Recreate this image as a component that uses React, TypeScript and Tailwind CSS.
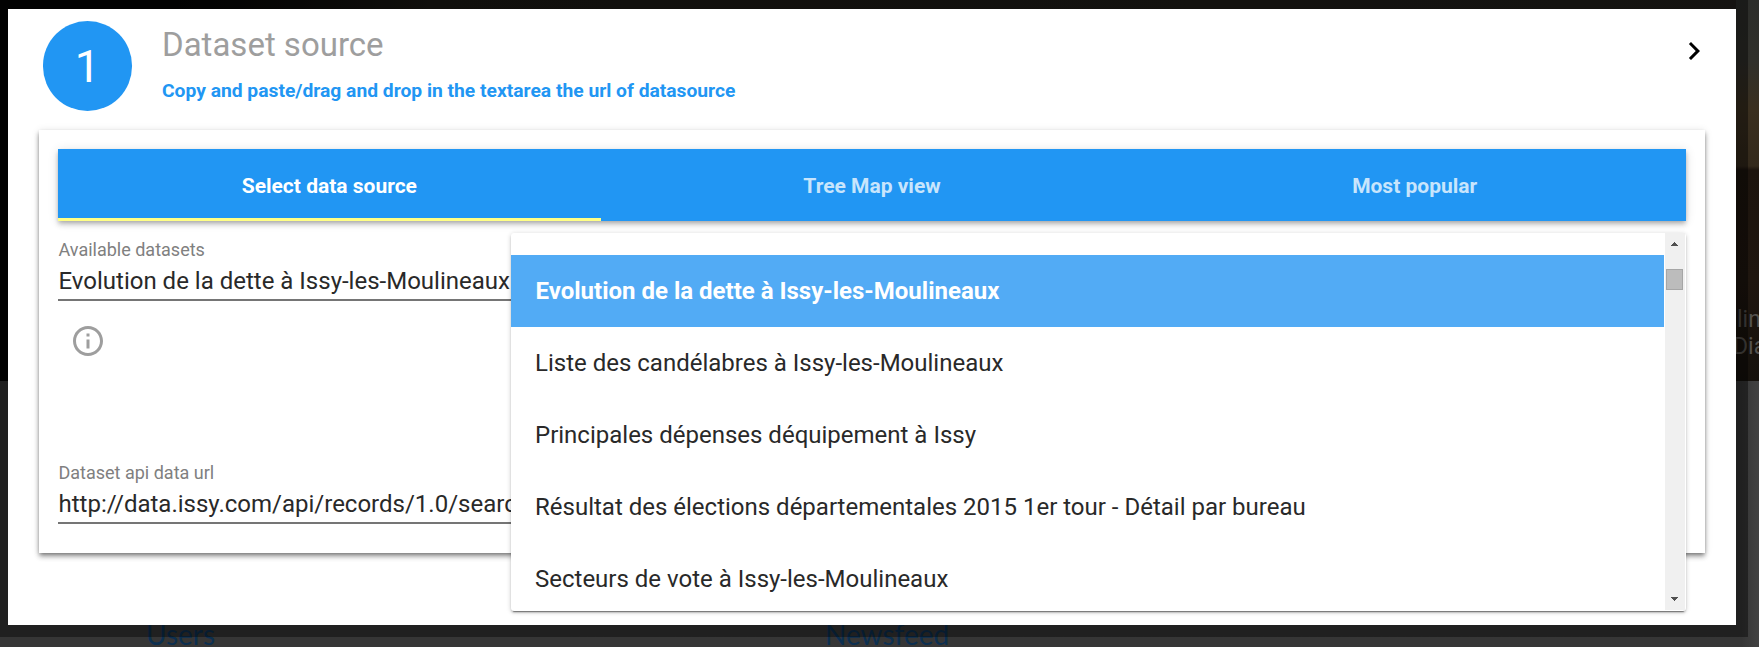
import React from "react";

const tabs = ["Select data source", "Tree Map view", "Most popular"];

const datasets = [
  "Evolution de la dette à Issy-les-Moulineaux",
  "Liste des candélabres à Issy-les-Moulineaux",
  "Principales dépenses déquipement à Issy",
  "Résultat des élections départementales 2015 1er tour - Détail par bureau",
  "Secteurs de vote à Issy-les-Moulineaux",
];

function Backdrop() {
  return (
    <div className="absolute inset-0 flex flex-col bg-[#363636]">
      <div className="flex h-[381px] shrink-0 justify-end bg-linear-to-r from-[#040404] from-10% via-[#1c1a15] via-25% to-[#23211d]">
        <div className="flex w-[23px] flex-col justify-end bg-[linear-gradient(#2c2d2a_0px,#30302b_60px,#3a2f1f_110px,#33291b_166px,#1c140d_170px,#1f160f_280px,#15110c_381px)] pb-[21px] text-[23px] leading-[27px] text-[#55524e]">
          <span className="ml-[1px] whitespace-nowrap">lin</span>
          <span className="-ml-[3px] whitespace-nowrap">Dia</span>
        </div>
      </div>
      <div className="flex flex-1 items-end bg-linear-to-r from-[#363636] from-[99%] to-[#424242] pl-[146px] font-['Lato',sans-serif] text-[28px] leading-[26px] text-[#0c2f50]">
        <span className="w-[679px]">Users</span>
        <span>Newsfeed</span>
      </div>
    </div>
  );
}

function Field({ label, value }: { label: string; value: string }) {
  return (
    <div className="flex h-[66px] flex-col border-b-2 border-[#757575] pt-[2px]">
      <span className="h-[26px] pl-[0.5px] text-[18px] leading-[26px] text-[#808080]">{label}</span>
      <span className="mt-px overflow-hidden pl-[0.5px] text-[24px] leading-[34px] whitespace-nowrap text-[#292929]">{value}</span>
    </div>
  );
}

function Scrollbar() {
  return (
    <div className="mr-px mb-px ml-px flex w-[20px] flex-col items-center bg-[#f0f0f0]">
      <svg width="7" height="4" viewBox="0 0 7 4" className="mt-[9px] mr-px" shapeRendering="crispEdges">
        <path d="M3 0h1v1h1v1h1v1h1v1H0V3h1V2h1V1h1z" fill="#505050" />
      </svg>
      <div className="mt-[23px] mr-[2px] h-[21px] w-[17px] border border-[#a6a6a6] bg-[#bcbcbc]" />
      <svg width="7" height="4" viewBox="0 0 7 4" className="mt-auto mr-px mb-[9px]" shapeRendering="crispEdges">
        <path d="M0 0h7v1H6v1H5v1H4v1H3V3H2V2H1V1H0z" fill="#505050" />
      </svg>
    </div>
  );
}

function DatasetMenu() {
  return (
    <div className="absolute top-[103px] left-[472px] flex h-[378px] w-[1175px] rounded-[3px] bg-white shadow-[0_1px_5px_rgba(0,0,0,0.2),0_2px_2px_rgba(0,0,0,0.14),0_3px_1px_-2px_rgba(0,0,0,0.4)]">
      <ul className="flex w-[1153px] flex-col overflow-hidden pt-[22px]">
        {datasets.map((name, i) => (
          <li
            key={name}
            className={
              i === 0
                ? "flex h-[72px] shrink-0 items-center bg-[#52abf5] pl-[24.5px] text-[24px] font-bold text-white"
                : "flex h-[72px] shrink-0 items-center pl-[24px] text-[24px] text-[#292929]"
            }
          >
            {name}
          </li>
        ))}
      </ul>
      <Scrollbar />
    </div>
  );
}

export default function App() {
  return (
    <div className="relative h-[647px] w-[1759px] overflow-hidden font-['Roboto',sans-serif]">
      <Backdrop />
      <div className="relative h-[637px] w-[1748px] bg-black/40 pt-[9px] pl-[8px]">
        <main className="h-[616px] w-[1728px] bg-white px-[31px]">
          <header className="flex h-[121px] pt-[12px] pl-[4px]">
            <div className="flex h-[90px] w-[89px] items-center justify-center rounded-full bg-[#2196f3] text-[45px] leading-none text-white">
              1
            </div>
            <div className="ml-[30px] flex flex-col">
              <h1 className="h-[49px] text-[33px] leading-[48px] text-[#9e9e9e]">Dataset source</h1>
              <p className="mt-[7px] text-[19.25px] leading-[28px] font-bold text-[#2196f3]">
                Copy and paste/drag and drop in the textarea the url of datasource
              </p>
            </div>
            <svg width="36" height="36" viewBox="0 0 24 24" className="mt-[12px] mr-[-7px] ml-auto">
              <path d="M10 6L8.59 7.41 13.17 12l-4.58 4.59L10 18l6-6z" fill="#000" />
            </svg>
          </header>
          <section className="relative h-[423px] w-[1666px] bg-white px-[19px] pt-[19px] shadow-[0_2px_4px_-1px_rgba(0,0,0,0.4),0_4px_5px_rgba(0,0,0,0.24),0_1px_8px_rgba(0,0,0,0.12)]">
            <nav className="grid h-[72px] grid-cols-3 bg-[#2196f3] text-[21px] font-bold shadow-[0_2px_4px_-1px_rgba(0,0,0,0.2),0_4px_5px_rgba(0,0,0,0.14),0_1px_10px_rgba(0,0,0,0.12)]">
              {tabs.map((tab, i) => (
                <div
                  key={tab}
                  className={
                    i === 0
                      ? "flex items-center justify-center border-b-3 border-[#ffff85] pt-[6px] text-white"
                      : "flex items-center justify-center pt-[3px] text-[#c8e5fc]"
                  }
                >
                  {tab}
                </div>
              ))}
            </nav>
            <div className="mt-[14px]">
              <Field label="Available datasets" value="Evolution de la dette à Issy-les-Moulineaux" />
            </div>
            <svg width="36" height="36" viewBox="0 0 24 24" className="mt-[22px] ml-[12px]">
              <path
                d="M11 17h2v-6h-2v6zm1-15C6.48 2 2 6.48 2 12s4.480 10 10 10 10-4.480 10-10S17.520 2 12 2zm0 18c-4.410 0-8-3.590-8-8s3.590-8 8-8 8 3.590 8 8-3.590 8-8 8zM11 9h2V7h-2v2z"
                fill="#9e9e9e"
              />
            </svg>
            <div className="mt-[99px]">
              <Field label="Dataset api data url" value="http://data.issy.com/api/records/1.0/search" />
            </div>
            <DatasetMenu />
          </section>
        </main>
      </div>
    </div>
  );
}
